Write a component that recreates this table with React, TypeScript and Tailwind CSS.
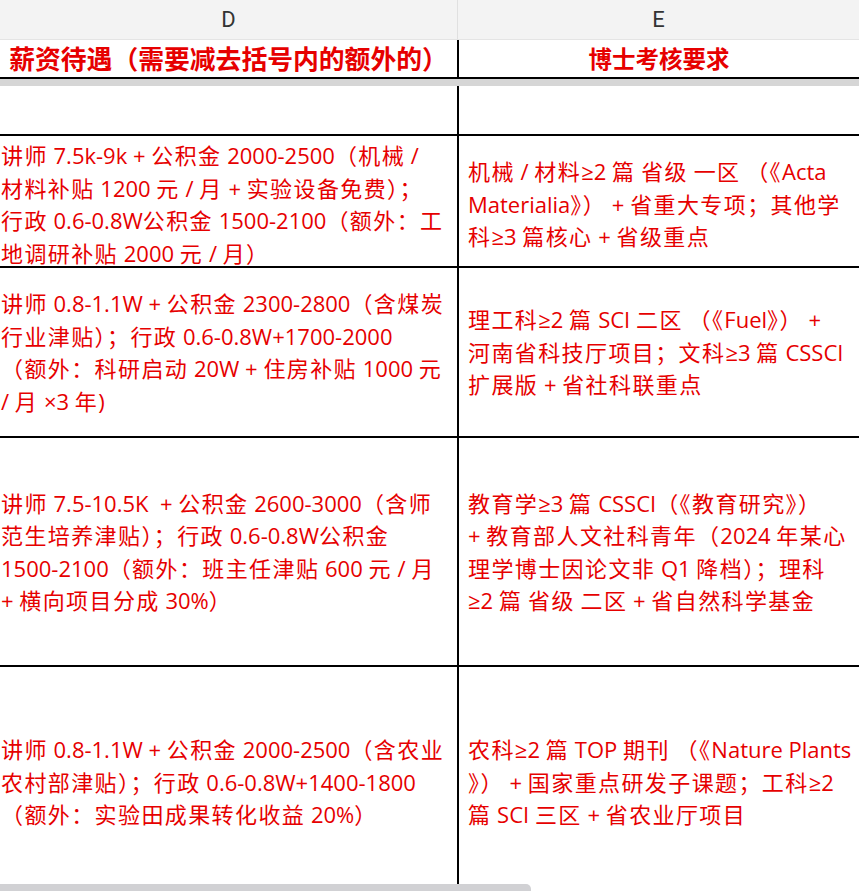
import React from 'react';

type Row = { height: number; d: string[]; e: string[]; shift?: boolean };

const rows: Row[] = [
  { height: 48, d: [], e: [] },
  {
    height: 130,
    shift: true,
    d: [
      '讲师 7.5k-9k + 公积金 2000-2500（机械 /',
      '材料补贴 1200 元 / 月 + 实验设备免费）；',
      '行政 0.6-0.8W公积金 1500-2100（额外：工',
      '地调研补贴 2000 元 / 月）',
    ],
    e: [
      '机械 / 材料≥2 篇 省级 一区 （《Acta',
      'Materialia》） + 省重大专项；其他学',
      '科≥3 篇核心 + 省级重点',
    ],
  },
  {
    height: 168,
    d: [
      '讲师 0.8-1.1W + 公积金 2300-2800（含煤炭',
      '行业津贴）；行政 0.6-0.8W+1700-2000',
      '（额外：科研启动 20W + 住房补贴 1000 元',
      '/ 月 ×3 年)',
    ],
    e: [
      '理工科≥2 篇 SCI 二区 （《Fuel》） +',
      '河南省科技厅项目；文科≥3 篇 CSSCI',
      '扩展版 + 省社科联重点',
    ],
  },
  {
    height: 227,
    d: [
      '讲师 7.5-10.5K  + 公积金 2600-3000（含师',
      '范生培养津贴）；行政 0.6-0.8W公积金',
      '1500-2100（额外：班主任津贴 600 元 / 月',
      '+ 横向项目分成 30%）',
    ],
    e: [
      '教育学≥3 篇 CSSCI（《教育研究》）',
      '+ 教育部人文社科青年（2024 年某心',
      '理学博士因论文非 Q1 降档）；理科',
      '≥2 篇 省级 二区 + 省自然科学基金',
    ],
  },
  {
    height: 230,
    d: [
      '讲师 0.8-1.1W + 公积金 2000-2500（含农业',
      '农村部津贴）；行政 0.6-0.8W+1400-1800',
      '（额外：实验田成果转化收益 20%）',
    ],
    e: [
      '农科≥2 篇 TOP 期刊 （《Nature Plants',
      '》） + 国家重点研发子课题；工科≥2',
      '篇 SCI 三区 + 省农业厅项目',
    ],
  },
];

// CJK runs get a little extra tracking, like the sheet's YaHei rendering
function Line({ text }: { text: string }) {
  const parts = text.split(/([\u3000-\u303f\u4e00-\u9fff\uff00-\uffef]+)/);
  return (
    <div className="whitespace-pre leading-[32.5px]">
      {parts.map((p, i) =>
        /[\u3000-\u303f\u4e00-\u9fff\uff00-\uffef]/.test(p) ? (
          <span key={i} className="tracking-[1.4px]">
            {p}
          </span>
        ) : (
          <span key={i}>{p}</span>
        )
      )}
    </div>
  );
}

function Lines({ lines }: { lines: string[] }) {
  return (
    <div>
      {lines.map((l, i) => (
        <Line key={i} text={l} />
      ))}
    </div>
  );
}

export default function App() {
  return (
    <div className="relative h-[891px] w-[859px] overflow-hidden bg-white font-['Open_Sans','Noto_Sans_CJK_SC',sans-serif] text-[22px] text-[#e60000]">
      {/* column letters */}
      <div className="flex h-[40px] border-b border-[#e4e4e4] bg-[#f3f3f3] font-['Roboto','Noto_Sans_CJK_SC',sans-serif] text-[22px] text-[#333]">
        <div className="flex w-[458px] items-center justify-center border-r border-[#e0e0e0]">D</div>
        <div className="flex flex-1 items-center justify-center">E</div>
      </div>

      {/* title row */}
      <div className="flex h-[39px] border-b-2 border-black font-['Noto_Sans_CJK_SC',sans-serif] font-bold">
        <div className="flex w-[459px] items-center justify-center overflow-hidden whitespace-nowrap border-r-2 border-black text-[25.8px]">
          薪资待遇（需要减去括号内的额外的）
        </div>
        <div className="flex flex-1 items-center justify-center text-[23.5px]">博士考核要求</div>
      </div>
      <div className="h-[7px] bg-[#d6d6d6]" />

      {rows.map((r, i) => (
        <div
          key={i}
          className="flex border-b-2 border-black"
          style={{ height: r.height + 2, minHeight: r.height + 2 }}
        >
          <div className={`flex w-[459px] shrink-0 items-center overflow-hidden border-r-2 border-black pl-[1px] ${r.shift ? 'pt-[6px]' : ''}`}>
            <Lines lines={r.d} />
          </div>
          <div className={`flex flex-1 items-center overflow-hidden pl-[9px] ${r.shift ? 'pt-[6px]' : ''}`}>
            <Lines lines={r.e} />
          </div>
        </div>
      ))}

      <div className="absolute bottom-0 left-0 h-[7px] w-[531px] rounded-tr-[5px] bg-[#d1d1d4]" />
    </div>
  );
}
